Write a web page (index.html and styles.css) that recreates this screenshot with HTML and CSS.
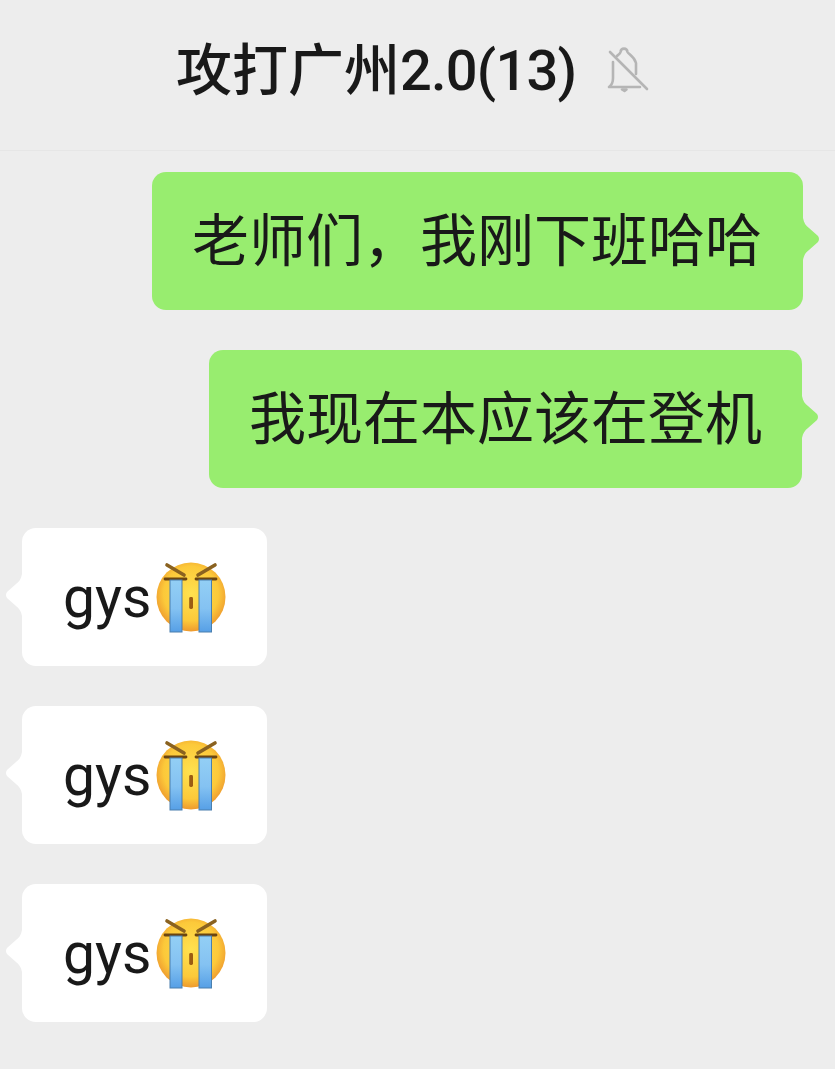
FILE: index.html
```html
<!DOCTYPE html>
<html lang="zh-CN">
<head>
  <meta charset="UTF-8">
  <title>攻打广州2.0(13)</title>
  <link rel="stylesheet" href="styles.css">
</head>
<body>
  <svg class="defs" width="0" height="0">
    <defs>
      <radialGradient id="face" cx="50%" cy="45%" r="55%">
        <stop offset="0%" stop-color="#ffe14f"/>
        <stop offset="72%" stop-color="#fcc93a"/>
        <stop offset="100%" stop-color="#ee9a2e"/>
      </radialGradient>
      <linearGradient id="tear" x1="0" y1="0" x2="0" y2="1">
        <stop offset="0%" stop-color="#93cff5"/>
        <stop offset="55%" stop-color="#84c2f2"/>
        <stop offset="100%" stop-color="#569fe6"/>
      </linearGradient>
      <symbol id="cry" viewBox="9 5 72 74">
        <circle cx="45" cy="42" r="34.500" fill="url(#face)"/>
        <path d="M21 10 L38 20 M69 10 L52 20" stroke="#8a6220" stroke-width="3.600" stroke-linecap="round"/>
        <path d="M19 24 H40 M50 24 H70" stroke="#6b4510" stroke-width="2.800" stroke-linecap="round"/>
        <rect x="24" y="25" width="12" height="52" fill="url(#tear)" stroke="#4a7fae" stroke-width="1"/>
        <rect x="53" y="25" width="12.500" height="52" fill="url(#tear)" stroke="#4a7fae" stroke-width="1"/>
        <rect x="43.200" y="42" width="3.800" height="12" rx="1.400" fill="#9c5c12"/>
      </symbol>
    </defs>
  </svg>

  <header class="top-bar">
    <h1 class="title">攻打广州<span class="count">2.0(13)</span></h1>
    <svg class="mute-icon" viewBox="14 14 44 48" width="44" height="48" fill="none" stroke="#b5b5b5" stroke-width="2.600" stroke-linecap="round" stroke-linejoin="round">
      <path d="M22 31 V47 C22 51 21 54 18 56 H49"/>
      <path d="M26 25 C28 23 29 23 29.500 21 C30 16.500 36 16.500 36.500 21 C37 23 43 25 45 32 V43"/>
      <path d="M19 21 L56 58"/>
      <path d="M31 58.500 H35.500 L33.500 60 Z" fill="#b5b5b5"/>
    </svg>
  </header>

  <main class="chat">
    <div class="bubble sent sent-long">老师们，我刚下班哈哈</div>
    <div class="bubble sent">我现在本应该在登机</div>
    <div class="bubble received">gys<svg class="emoji"><use href="#cry"/></svg></div>
    <div class="bubble received">gys<svg class="emoji"><use href="#cry"/></svg></div>
    <div class="bubble received">gys<svg class="emoji"><use href="#cry"/></svg></div>
  </main>
</body>
</html>
```

FILE: styles.css
```css
* {
  box-sizing: border-box;
}

body {
  margin: 0;
  height: 1069px;
  overflow: hidden;
  background-color: #ededed;
  color: #191919;
  font-family: "Roboto", "Noto Sans CJK SC", sans-serif;
}

.defs {
  position: absolute;
}

.top-bar {
  display: flex;
  align-items: center;
  height: 151px;
  padding-left: 176px;
  padding-bottom: 8px;
  border-bottom: 1px solid #e6e6e6;
}

.title {
  margin: 0;
  font-size: 56px;
  font-weight: 500;
  line-height: 1;
  white-space: nowrap;
}

.count {
  letter-spacing: -0.8px;
}

.mute-icon {
  margin-left: 29px;
  margin-top: -4px;
}

.chat {
  display: flex;
  flex-direction: column;
  gap: 40px;
  padding: 21px 33px 0 22px;
}

.bubble {
  position: relative;
  display: flex;
  align-items: center;
  height: 138px;
  border-radius: 14px;
  font-size: 57px;
  line-height: 1;
  white-space: nowrap;
}

/* little arrow on the side of each bubble, flares into the edge */
.bubble::after {
  content: "";
  position: absolute;
  top: 50%;
  width: 17px;
  height: 42px;
  margin-top: -23px;
}

.sent {
  align-self: flex-end;
  width: 593px;
  padding-left: 40px;
  background-color: #98ed6f;
}

.sent-long {
  width: 651px;
  margin-right: -1px;
}

.sent::after {
  left: 100%;
  background-color: #98ed6f;
  clip-path: path("M0 0 C1 5 3 8 6 10 L15 18 Q17 21 15 24 L6 32 C3 34 1 37 0 42 Z");
}

.received {
  align-self: flex-start;
  width: 245px;
  padding-left: 41px;
  background-color: #fff;
}

.received::after {
  right: 100%;
  background-color: #fff;
  clip-path: path("M17 0 C16 5 14 8 11 10 L2 18 Q0 21 2 24 L11 32 C14 34 16 37 17 42 Z");
}

.emoji {
  width: 72px;
  height: 74px;
  margin-left: 4px;
}
```
